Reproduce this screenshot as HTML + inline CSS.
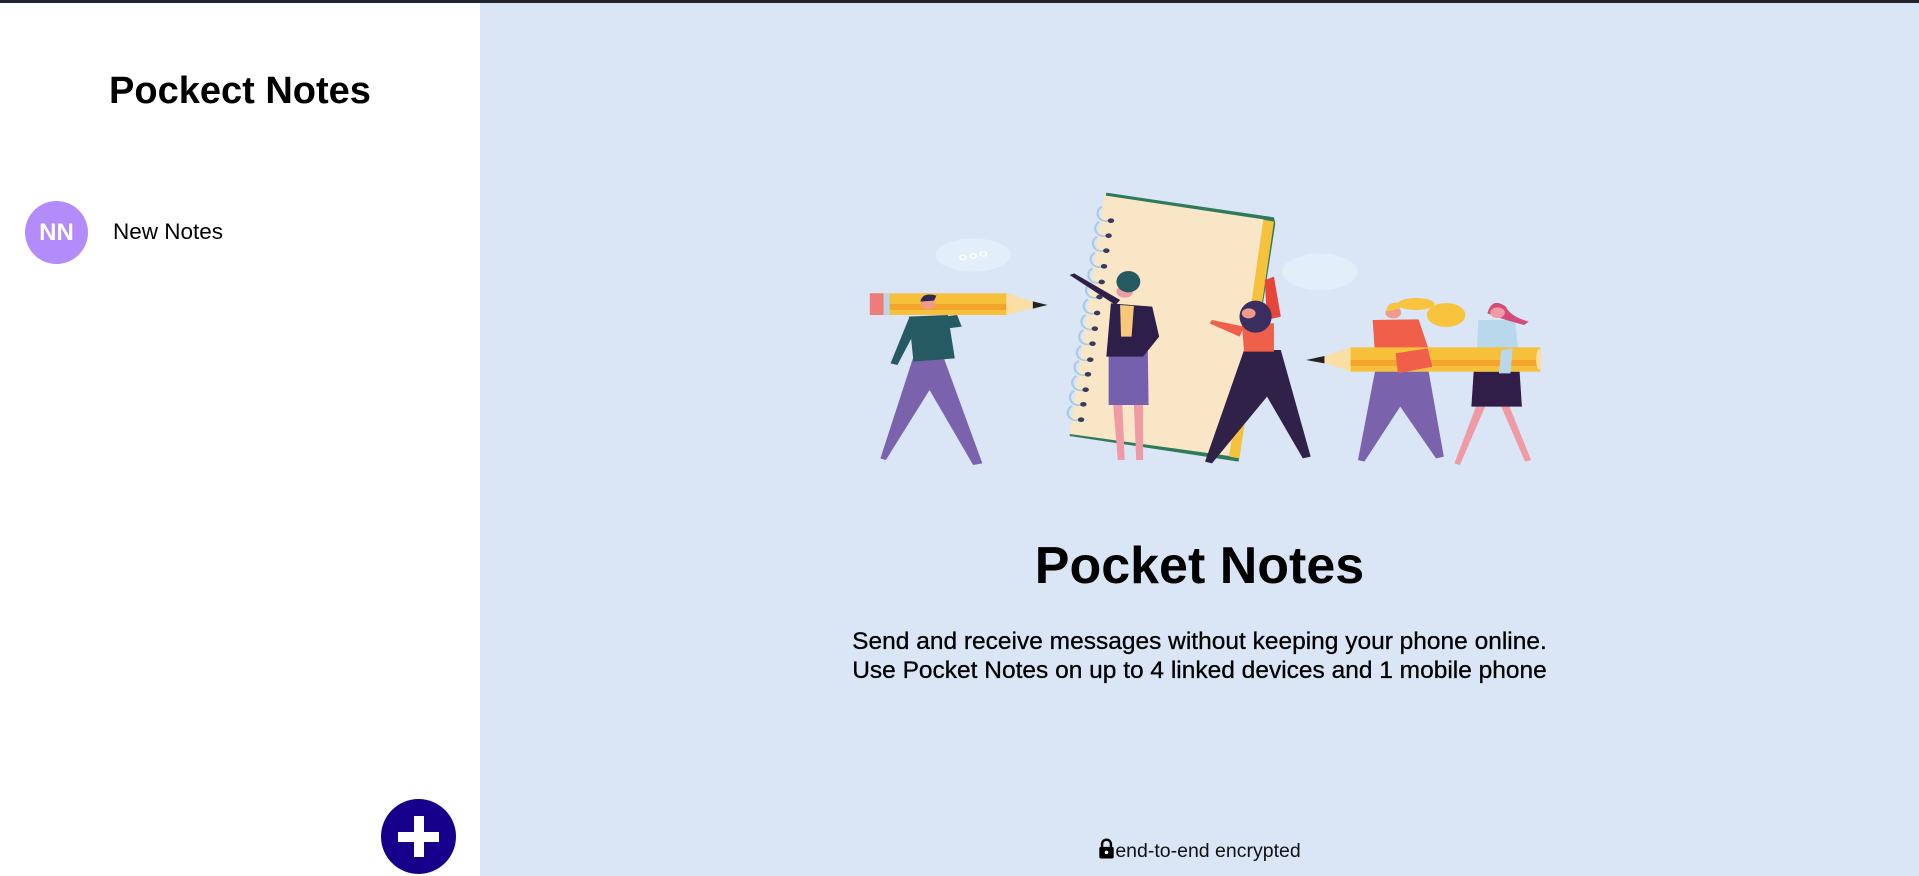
<!DOCTYPE html>
<html><head><meta charset="utf-8"><style>
*{margin:0;padding:0;box-sizing:border-box}
body{width:1919px;height:876px;overflow:hidden;font-family:"Liberation Sans",sans-serif;background:#dae5f5;position:relative}
.topbar{position:absolute;left:0;top:0;width:1919px;height:3px;background:#1f252b}
.side{position:absolute;left:0;top:3px;width:480px;height:873px;background:#fff}
.title{position:absolute;left:0;width:480px;top:67px;text-align:center;font-size:38px;font-weight:bold;color:#000}
.av{position:absolute;left:25px;top:198px;width:63px;height:63px;border-radius:50%;background:#b38bfa;color:#fff;font-weight:bold;font-size:24px;text-align:center;line-height:63px}
.nn{position:absolute;left:113px;top:216px;font-size:22.5px;color:#000}
.plus{position:absolute;left:381px;top:796px;width:75px;height:75px;border-radius:50%;background:#16008b}
.plus:before{content:"";position:absolute;left:33px;top:17px;width:10px;height:41px;background:#fff}
.plus:after{content:"";position:absolute;left:17px;top:33px;width:41px;height:10px;background:#fff}
.h{position:absolute;left:480px;width:1439px;top:536px;text-align:center;font-size:52px;font-weight:bold;color:#000}
.sub{position:absolute;left:480px;width:1439px;top:627px;text-align:center;font-size:24.5px;line-height:29px;color:#000;-webkit-text-stroke:0.3px #000}
.enc{position:absolute;left:480px;width:1439px;top:838px;text-align:center;font-size:19.5px;color:#111}
svg.ill{position:absolute;left:840px;top:180px;width:720px;height:300px}
</style></head><body>
<div class="topbar"></div>
<div class="side">
<div class="title">Pockect Notes</div>
<div class="av">NN</div>
<div class="nn">New Notes</div>
<div class="plus"></div>
</div>
<svg class="ill" viewBox="0 0 1568 900" preserveAspectRatio="none">
<ellipse cx="290" cy="225" rx="82" ry="50" fill="#e2eef9"/>
<circle cx="268" cy="232" r="7" fill="none" stroke="#fff" stroke-width="3"/><circle cx="290" cy="228" r="7" fill="none" stroke="#fff" stroke-width="3"/><circle cx="312" cy="222" r="7" fill="none" stroke="#fff" stroke-width="3"/>
<ellipse cx="1045" cy="275" rx="82" ry="55" fill="#e2eef9"/>
<polygon points="580,38 945,112 948,130 868,845 500,768" fill="#2f7a5a"/>
<polygon points="918,118 945,125 870,835 848,830" fill="#f5c33b"/>
<polygon points="575,46 922,118 848,828 500,762" fill="#f8e6c6"/>
<g fill="none" stroke="#a8cce6" stroke-width="5">
<path d="M590,120 a18,22 0 1 1 -20,-40"/><path d="M585,165 a18,22 0 1 1 -20,-40"/><path d="M580,210 a18,22 0 1 1 -20,-40"/><path d="M575,258 a18,22 0 1 1 -20,-40"/><path d="M570,305 a18,22 0 1 1 -20,-40"/><path d="M565,350 a18,22 0 1 1 -20,-40"/><path d="M560,398 a18,22 0 1 1 -20,-40"/><path d="M555,445 a18,22 0 1 1 -20,-40"/><path d="M550,490 a18,22 0 1 1 -20,-40"/><path d="M545,538 a18,22 0 1 1 -20,-40"/><path d="M540,582 a18,22 0 1 1 -20,-40"/><path d="M535,628 a18,22 0 1 1 -20,-40"/><path d="M530,672 a18,22 0 1 1 -20,-40"/><path d="M525,718 a18,22 0 1 1 -20,-40"/>
</g>
<g fill="#3a3a5a"><circle cx="590" cy="122" r="7"/><circle cx="585" cy="167" r="7"/><circle cx="580" cy="212" r="7"/><circle cx="575" cy="259" r="7"/><circle cx="570" cy="306" r="7"/><circle cx="565" cy="351" r="7"/><circle cx="560" cy="399" r="7"/><circle cx="555" cy="446" r="7"/><circle cx="550" cy="491" r="7"/><circle cx="545" cy="539" r="7"/><circle cx="540" cy="583" r="7"/><circle cx="535" cy="629" r="7"/><circle cx="530" cy="673" r="7"/><circle cx="525" cy="719" r="7"/></g>
<polygon points="160,530 225,530 310,850 290,855 195,630 100,840 88,835" fill="#7b62ad"/>
<polygon points="150,410 235,405 250,535 160,545" fill="#265a63"/>
<polygon points="150,415 110,550 125,555 165,450" fill="#265a63"/>
<polygon points="225,410 255,405 265,440 235,445" fill="#265a63"/>
<rect x="65" y="340" width="300" height="65" fill="#f6c03a"/>
<rect x="95" y="372" width="270" height="18" fill="#f2a52a"/>
<rect x="65" y="340" width="30" height="65" fill="#f07b7b"/>
<rect x="95" y="340" width="13" height="65" fill="#b9d6ea"/>
<polygon points="362,340 440,372 440,378 362,405" fill="#f9dfa5"/>
<polygon points="420,364 452,375 420,386" fill="#222"/>
<circle cx="192" cy="372" r="16" fill="#f09a8c"/>
<path d="M175,365 q5,-30 35,-18 l-5,15 z" fill="#2d2a5a"/>
<polygon points="595,675 615,675 620,840 605,840" fill="#f09aa5"/>
<polygon points="640,675 660,675 660,840 645,840" fill="#f09aa5"/>
<polygon points="585,480 670,480 672,675 585,675" fill="#7560ad"/>
<polygon points="590,370 680,380 695,470 660,530 580,530" fill="#2d1f4a"/>
<polygon points="610,375 640,378 635,470 612,470" fill="#f9c87a"/>
<polygon points="600,375 500,285 510,280 610,360" fill="#2d1f4a"/>
<circle cx="620" cy="335" r="18" fill="#f09aa5"/>
<ellipse cx="628" cy="305" rx="26" ry="32" fill="#265a63"/>
<polygon points="930,420 925,300 945,290 960,410" fill="#e8453a"/>
<polygon points="880,510 960,510 1025,830 1008,835 930,650 810,850 795,845" fill="#2f2148"/>
<polygon points="875,430 945,430 945,515 880,515" fill="#ef5f4a"/>
<polygon points="880,440 810,420 805,430 870,470" fill="#ef5f4a"/>
<ellipse cx="905" cy="410" rx="35" ry="48" fill="#3a2d60"/>
<circle cx="890" cy="400" r="15" fill="#f09a8c"/>
<polygon points="1385,680 1405,680 1350,855 1338,850" fill="#f09aa5"/>
<polygon points="1440,680 1458,680 1505,840 1492,845" fill="#f09aa5"/>
<polygon points="1380,575 1480,575 1485,680 1375,680" fill="#301d48"/>
<polygon points="1390,420 1470,420 1482,575 1385,575" fill="#b8d8ec"/>
<path d="M1410,400 q10,-50 40,-20 q10,30 50,45 l-10,10 q-40,-15 -50,-20 z" fill="#d24b7a"/>
<circle cx="1432" cy="398" r="16" fill="#f09aa5"/>
<polygon points="1165,575 1282,575 1315,830 1298,835 1220,680 1142,845 1128,840" fill="#7b62ad"/>
<ellipse cx="1320" cy="405" rx="42" ry="36" fill="#f8c33d"/>
<ellipse cx="1255" cy="372" rx="40" ry="18" fill="#f8c33d"/>
<polygon points="1160,420 1260,418 1285,520 1165,522" fill="#ef5f4a"/>
<circle cx="1205" cy="398" r="17" fill="#f09a8c"/>
<path d="M1190,395 q0,-35 35,-25 l-5,15 z" fill="#f8c33d"/>
<rect x="1110" y="502" width="415" height="73" fill="#f6c03a"/>
<rect x="1110" y="540" width="415" height="18" fill="#f2a52a"/>
<polygon points="1112,502 1040,535 1040,542 1112,575" fill="#f9dfa5"/>
<polygon points="1055,528 1015,540 1055,550" fill="#222"/>
<ellipse cx="1522" cy="538" rx="6" ry="30" fill="#f9dfa5"/>
<polygon points="1210,520 1280,505 1290,560 1215,580" fill="#ef5f4a"/>
<polygon points="1440,510 1465,505 1460,580 1435,580" fill="#b8d8ec"/>
</svg>
<div class="h">Pocket Notes</div>
<div class="sub">Send and receive messages without keeping your phone online.<br>Use Pocket Notes on up to 4 linked devices and 1 mobile phone</div>
<div class="enc"><svg width="17" height="21" viewBox="0 0 15 19" style="vertical-align:-2px"><path d="M3.5,8 V5.5 a4,4 0 0 1 8,0 V8" fill="none" stroke="#000" stroke-width="2.2"/><rect x="1" y="8" width="13" height="10.5" rx="1.5" fill="#000"/><circle cx="7.5" cy="13" r="1.6" fill="#fff"/></svg>end-to-end encrypted</div>
</body></html>
